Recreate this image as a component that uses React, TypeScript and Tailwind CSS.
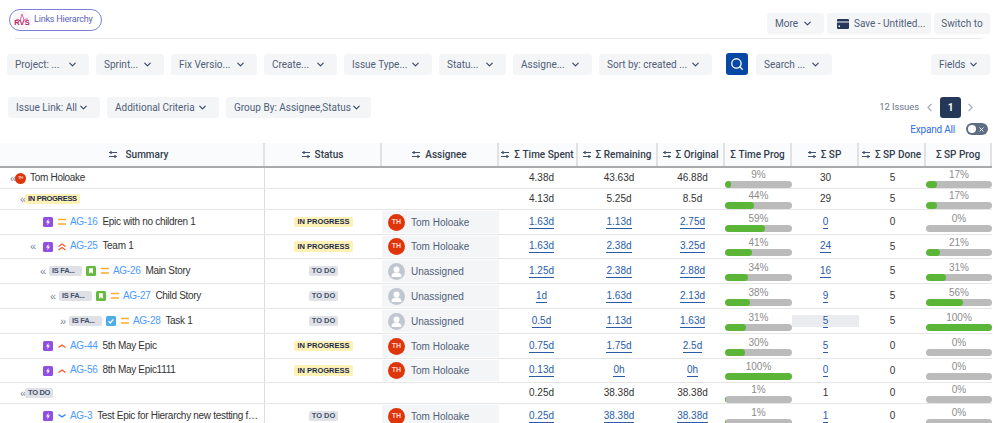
import { ChevronDown, ChevronLeft, ChevronRight, Search, X } from 'lucide-react';

const uiFont = "font-['Roboto',sans-serif]";

const topFilters = [
  { label: 'Project: ...', className: 'w-[82px]' },
  { label: 'Sprint...', className: 'w-[68px]' },
  { label: 'Fix Versio...', className: 'w-[86px]' },
  { label: 'Create...', className: 'w-[73px]' },
  { label: 'Issue Type...', className: 'w-[88px]' },
  { label: 'Statu...', className: 'w-[67px]' },
  { label: 'Assigne...', className: 'w-[79px]' },
  { label: 'Sort by: created ...', className: 'w-[113px]' },
];

const secondFilters = [
  { label: 'Issue Link: All', className: 'w-[92px]' },
  { label: 'Additional Criteria', className: 'w-[112px]' },
  { label: 'Group By: Assignee,Status', className: 'w-[145px]' },
];

const columns = [
  { label: 'Summary', className: 'w-[265px] gap-[9px] pl-[14px]', sort: true },
  { label: 'Status', className: 'w-[117px] gap-[5px]', sort: true },
  { label: 'Assignee', className: 'w-[117px] gap-[5px]', sort: true },
  { label: 'Σ Time Spent', className: 'w-[79px] gap-[5px]', sort: true },
  { label: 'Σ Remaining', className: 'w-[80px] gap-[5px]', sort: true },
  { label: 'Σ Original', className: 'w-[67px] gap-[5px]', sort: true },
  { label: 'Σ Time Prog', className: 'w-[67px] gap-[5px]', sort: false },
  { label: 'Σ SP', className: 'w-[67px] gap-[5px]', sort: true },
  { label: 'Σ SP Done', className: 'w-[67px] gap-[5px]', sort: true },
  { label: 'Σ SP Prog', className: 'w-[66px] gap-[5px]', sort: false },
];

type Row = {
  height: string;
  pad: string;
  toggle?: string;
  group?: 'person' | 'IN PROGRESS' | 'TO DO';
  link?: boolean;
  type?: 'epic' | 'story' | 'task';
  priority?: 'medium' | 'high' | 'major' | 'low';
  issue?: string;
  title?: string;
  status?: 'IN PROGRESS' | 'TO DO';
  assignee?: string;
  spent: string;
  remaining: string;
  original: string;
  timeProg: number;
  sp: string;
  spDone: string;
  spProg: number;
  linked?: boolean;
  highlight?: boolean;
};

const rows: Row[] = [
  { height: 'h-[21px]', pad: 'pl-[10px]', toggle: '«', group: 'person', spent: '4.38d', remaining: '43.63d', original: '46.88d', timeProg: 9, sp: '30', spDone: '5', spProg: 17 },
  { height: 'h-[21px]', pad: 'pl-[20px]', toggle: '«', group: 'IN PROGRESS', spent: '4.13d', remaining: '5.25d', original: '8.5d', timeProg: 44, sp: '29', spDone: '5', spProg: 17 },
  { height: 'h-[25px]', pad: 'pl-[43px]', type: 'epic', priority: 'medium', issue: 'AG-16', title: 'Epic with no children 1', status: 'IN PROGRESS', assignee: 'Tom Holoake', spent: '1.63d', remaining: '1.13d', original: '2.75d', timeProg: 59, sp: '0', spDone: '0', spProg: 0, linked: true },
  { height: 'h-[24px]', pad: 'pl-[30px]', toggle: '«', type: 'epic', priority: 'major', issue: 'AG-25', title: 'Team 1', status: 'IN PROGRESS', assignee: 'Tom Holoake', spent: '1.63d', remaining: '2.38d', original: '3.25d', timeProg: 41, sp: '24', spDone: '5', spProg: 21, linked: true },
  { height: 'h-[25px]', pad: 'pl-[40px]', toggle: '«', link: true, type: 'story', priority: 'medium', issue: 'AG-26', title: 'Main Story', status: 'TO DO', assignee: 'Unassigned', spent: '1.25d', remaining: '2.38d', original: '2.88d', timeProg: 34, sp: '16', spDone: '5', spProg: 31, linked: true },
  { height: 'h-[25px]', pad: 'pl-[50px]', toggle: '«', link: true, type: 'story', priority: 'medium', issue: 'AG-27', title: 'Child Story', status: 'TO DO', assignee: 'Unassigned', spent: '1d', remaining: '1.63d', original: '2.13d', timeProg: 38, sp: '9', spDone: '5', spProg: 56, linked: true },
  { height: 'h-[25px]', pad: 'pl-[60px]', toggle: '»', link: true, type: 'task', priority: 'medium', issue: 'AG-28', title: 'Task 1', status: 'TO DO', assignee: 'Unassigned', spent: '0.5d', remaining: '1.13d', original: '1.63d', timeProg: 31, sp: '5', spDone: '5', spProg: 100, linked: true, highlight: true },
  { height: 'h-[25px]', pad: 'pl-[43px]', type: 'epic', priority: 'high', issue: 'AG-44', title: '5th May Epic', status: 'IN PROGRESS', assignee: 'Tom Holoake', spent: '0.75d', remaining: '1.75d', original: '2.5d', timeProg: 30, sp: '5', spDone: '0', spProg: 0, linked: true },
  { height: 'h-[24px]', pad: 'pl-[43px]', type: 'epic', priority: 'high', issue: 'AG-56', title: '8th May Epic1111', status: 'IN PROGRESS', assignee: 'Tom Holoake', spent: '0.13d', remaining: '0h', original: '0h', timeProg: 100, sp: '0', spDone: '0', spProg: 0, linked: true },
  { height: 'h-[21px]', pad: 'pl-[20px]', toggle: '«', group: 'TO DO', spent: '0.25d', remaining: '38.38d', original: '38.38d', timeProg: 1, sp: '1', spDone: '0', spProg: 0 },
  { height: 'h-[25px]', pad: 'pl-[43px]', type: 'epic', priority: 'low', issue: 'AG-3', title: 'Test Epic for Hierarchy new testting for long summary', status: 'TO DO', assignee: 'Tom Holoake', spent: '0.25d', remaining: '38.38d', original: '38.38d', timeProg: 1, sp: '1', spDone: '0', spProg: 0, linked: true },
];

function FilterButton({ label, className }: { label: string; className: string }) {
  return (
    <button className={`${className} ${uiFont} flex h-[21px] shrink-0 items-center justify-between rounded-[3px] bg-[#f4f5f7] pl-2 pr-[11px] text-[10px] text-[#505f79]`}>
      <span className="whitespace-nowrap">{label}</span>
      <ChevronDown size={11} strokeWidth={2.5} className="shrink-0 text-[#344563]" />
    </button>
  );
}

function SortIcon() {
  return (
    <svg width="8" height="7" viewBox="0 0 8 7" className="shrink-0 text-[#42526e]">
      <path d="M0 1.5h8M0 5.5h8" stroke="currentColor" strokeWidth="1" />
      <path d="M2 0v3M6 4v3" stroke="currentColor" strokeWidth="1.3" />
    </svg>
  );
}

function Logo() {
  return (
    <svg width="18" height="18" viewBox="0 0 18 18" className="shrink-0">
      <circle cx="9" cy="9" r="8.5" fill="#fdf7fb" stroke="#eee3ee" strokeWidth="0.5" />
      <path d="M3 9l2-1 2 2 2-7 2 6 2-1h2" fill="none" stroke="#e26a9c" strokeWidth="1" />
      <text x="9" y="14" textAnchor="middle" fontSize="7.5" fontWeight="700" fill="#b3245e" fontFamily="Liberation Sans">RVS</text>
    </svg>
  );
}

function TypeIcon({ type }: { type: Row['type'] }) {
  if (type === 'story') {
    return (
      <svg width="10" height="10" viewBox="0 0 10 10" className="shrink-0">
        <rect width="10" height="10" rx="1.5" fill="#63ba3c" />
        <path d="M3 2.2h4v5.6L5 6.3 3 7.8z" fill="#fff" />
      </svg>
    );
  }
  if (type === 'task') {
    return (
      <svg width="10" height="10" viewBox="0 0 10 10" className="shrink-0">
        <rect width="10" height="10" rx="1.5" fill="#4bade8" />
        <path d="M2.6 5.2l1.7 1.7 3.1-3.5" fill="none" stroke="#fff" strokeWidth="1.4" />
      </svg>
    );
  }
  return (
    <svg width="10" height="10" viewBox="0 0 10 10" className="shrink-0">
      <rect width="10" height="10" rx="1.5" fill="#904ee2" />
      <path d="M5.6 1.8L3 5.5h1.7l-.4 2.7L7 4.5H5.3z" fill="#fff" />
    </svg>
  );
}

function PriorityIcon({ priority }: { priority: Row['priority'] }) {
  if (priority === 'medium') {
    return (
      <svg width="8" height="8" viewBox="0 0 8 8" className="shrink-0">
        <path d="M0 1.5h8M0 6h8" stroke="#ffab2e" strokeWidth="1.5" />
      </svg>
    );
  }
  if (priority === 'low') {
    return (
      <svg width="8" height="8" viewBox="0 0 8 8" className="shrink-0">
        <path d="M.5 2.5L4 5l3.5-2.5" fill="none" stroke="#2684ff" strokeWidth="1.4" />
      </svg>
    );
  }
  if (priority === 'major') {
    return (
      <svg width="8" height="8" viewBox="0 0 8 8" className="shrink-0">
        <path d="M.5 3.5L4 1l3.5 2.5M.5 7L4 4.5 7.5 7" fill="none" stroke="#ff5630" strokeWidth="1.2" />
      </svg>
    );
  }
  return (
    <svg width="8" height="8" viewBox="0 0 8 8" className="shrink-0">
      <path d="M.5 5.5L4 3l3.5 2.5" fill="none" stroke="#ff5630" strokeWidth="1.4" />
    </svg>
  );
}

function Lozenge({ label, wide }: { label: string; wide?: boolean }) {
  const tone = label === 'IN PROGRESS' ? 'bg-[#fff0b3] text-[#172b4d]' : 'bg-[#dfe1e6] text-[#42526e]';
  return (
    <span className={`${tone} ${wide ? 'w-[33px]' : ''} inline-flex h-[10.5px] shrink-0 items-center rounded-[2px] px-[3px] font-['Liberation_Sans',sans-serif] text-[7.5px] font-bold whitespace-nowrap`}>
      {label}
    </span>
  );
}

function Avatar({ name, small }: { name: string; small?: boolean }) {
  if (name === 'Unassigned') {
    return (
      <svg width="17" height="17" viewBox="0 0 17 17" className="shrink-0">
        <circle cx="8.5" cy="8.5" r="8.5" fill="#c1c7d0" />
        <circle cx="8.5" cy="6.5" r="3" fill="#fff" />
        <path d="M3.5 14c0-3.5 2-4.5 5-4.5s5 1 5 4.5z" fill="#fff" />
      </svg>
    );
  }
  return (
    <span className={`${small ? 'h-[11px] w-[11px] text-[4px]' : 'h-[17px] w-[17px] text-[7px]'} flex shrink-0 items-center justify-center rounded-full bg-[#de350b] font-bold text-[#ffd5cc]`}>
      TH
    </span>
  );
}

function Progress({ value }: { value: number }) {
  return (
    <div className="flex w-full flex-col items-center">
      <span className="text-[10px] leading-[12px] text-[#8c8c8c]">{value}%</span>
      <div className="h-[7px] w-full overflow-hidden rounded-full bg-[#bbbbbb]">
        <div className="h-full rounded-full bg-[#5bb537]" style={{ width: `${value}%`, minWidth: value > 1 ? 6 : 0 }} />
      </div>
    </div>
  );
}

function Value({ value, linked }: { value: string; linked?: boolean }) {
  return linked ? (
    <span className="border-b border-[#2a5ca8] text-[10px] leading-[12px] text-[#2a5ca8]">{value}</span>
  ) : (
    <span className="text-[10px] leading-[12px] text-[#333333]">{value}</span>
  );
}

function TableRow({ row }: { row: Row }) {
  return (
    <div className={`${row.height} flex items-stretch border-b-[1.5px] border-[#e6e6e6] font-['Liberation_Sans',sans-serif]`}>
      <div className={`${row.pad} flex w-[265px] items-center border-r border-[#dddddd] text-[10px] tracking-[-0.3px] text-[#333333]`}>
        {row.toggle && <span className="w-[5px] text-[11px] leading-none text-[#7a869a]">{row.toggle}</span>}
        {row.group === 'person' ? (
          <div className="flex items-center gap-[4px]">
            <Avatar name="Tom Holoake" small />
            <span className="mb-[2px]">Tom Holoake</span>
          </div>
        ) : row.group ? (
          <Lozenge label={row.group} />
        ) : (
          <div className={`${row.toggle ? (row.link ? 'ml-[4px]' : 'ml-[8px]') : ''} flex min-w-0 items-center`}>
            {row.link && <span className="mr-[4px] flex"><Lozenge label="IS FA..." wide /></span>}
            <TypeIcon type={row.type} />
            <span className="ml-[5px] flex"><PriorityIcon priority={row.priority} /></span>
            <span className="mb-[2px] ml-[4px] shrink-0 text-[#4c9aff]">{row.issue}</span>
            <span className="mb-[2px] ml-[5px] w-[162px] truncate">{row.title}</span>
          </div>
        )}
      </div>
      <div className="flex w-[117px] items-center justify-center">
        {row.status && <Lozenge label={row.status} />}
      </div>
      <div className="w-[117px] py-[1px]">
        {row.assignee && (
          <div className="flex h-full items-center gap-[6px] bg-[#f4f5f7] pl-[6px] text-[10px] text-[#505f79]">
            <Avatar name={row.assignee} />
            <span>{row.assignee}</span>
          </div>
        )}
      </div>
      <div className="flex w-[79px] items-center justify-center pl-[6px]"><Value value={row.spent} linked={row.linked} /></div>
      <div className="flex w-[80px] items-center justify-center pl-[2px]"><Value value={row.remaining} linked={row.linked} /></div>
      <div className="flex w-[67px] items-center justify-center pl-[2px]"><Value value={row.original} linked={row.linked} /></div>
      <div className="flex w-[67px] items-center"><Progress value={row.timeProg} /></div>
      <div className="flex w-[67px] items-center justify-center">
        <div className={`${row.highlight ? 'bg-[#ebecf0]' : ''} flex h-[12px] w-full items-center justify-center`}>
          <Value value={row.sp} linked={row.linked} />
        </div>
      </div>
      <div className="flex w-[67px] items-center justify-center"><Value value={row.spDone} /></div>
      <div className="flex w-[66px] items-center"><Progress value={row.spProg} /></div>
    </div>
  );
}

export default function App() {
  return (
    <div className="h-[423px] w-[999px] overflow-hidden bg-white">
      <div className="flex h-[38px] items-start justify-between pl-[9px] pr-[9px]">
        <div className="mt-[9px] flex h-[22px] w-[93px] items-center gap-[3px] rounded-full border border-[#7a80d6] pl-[3px]">
          <Logo />
          <span className={`${uiFont} whitespace-nowrap text-[9px] tracking-[-0.2px] text-[#5b63b7]`}>Links Hierarchy</span>
        </div>
        <div className={`${uiFont} mt-[13px] flex gap-[3px] text-[10px] text-[#505f79]`}>
          <button className="flex h-[21px] w-[57px] items-center justify-between rounded-[3px] bg-[#f4f5f7] pl-2 pr-[11px]">
            More
            <ChevronDown size={11} strokeWidth={2.5} className="text-[#344563]" />
          </button>
          <button className="flex h-[21px] w-[104px] items-center gap-[5px] whitespace-nowrap rounded-[3px] bg-[#f4f5f7] pl-[10px]">
            <svg width="12" height="10" viewBox="0 0 12 10" className="shrink-0">
              <path d="M1 0h10a1 1 0 011 1v1.5H0V1a1 1 0 011-1zM0 3.5h12V9a1 1 0 01-1 1H1a1 1 0 01-1-1z" fill="#253858" />
              <rect x="1.5" y="6.5" width="1.5" height="1.5" fill="#fff" />
            </svg>
            Save - Untitled...
          </button>
          <button className="flex h-[21px] w-[56px] items-center justify-center rounded-[3px] bg-[#f4f5f7]">Switch to</button>
        </div>
      </div>
      <div className="ml-[15px] h-[1px] w-[967px] bg-[#e8e8e8]" />

      <div className="mt-[14px] flex items-center pl-[7px] pr-[9px]">
        <div className="flex gap-[7px]">
          {topFilters.map((f) => (
            <FilterButton key={f.label} label={f.label} className={f.className} />
          ))}
        </div>
        <button className="ml-[14px] flex h-[22px] w-[22px] items-center justify-center rounded-[3px] bg-[#0747a6]">
          <Search size={14} strokeWidth={2.2} className="text-white" />
        </button>
        <div className="ml-[8px]">
          <FilterButton label="Search ..." className="w-[76px]" />
        </div>
        <div className="ml-auto">
          <FilterButton label="Fields" className="w-[59px]" />
        </div>
      </div>

      <div className="mt-[22px] flex h-[46px] items-start justify-between pl-[8px] pr-[11px]">
        <div className="flex gap-[7px]">
          {secondFilters.map((f) => (
            <FilterButton key={f.label} label={f.label} className={f.className} />
          ))}
        </div>
        <div className={`${uiFont} flex flex-col items-end`}>
          <div className="flex h-[21px] items-center text-[9.5px] tracking-[-0.1px] text-[#6b778c]">
            <span>12 Issues</span>
            <ChevronLeft size={13} className="ml-[4px] text-[#a5adba]" />
            <span className="ml-[4px] flex h-[21px] w-[21px] items-center justify-center rounded-[3px] bg-[#253858] text-[10px] font-bold text-white">1</span>
            <ChevronRight size={13} className="ml-[3px] text-[#a5adba]" />
            <span className="w-[11px]" />
          </div>
          <div className="mt-[5px] flex h-[12px] items-center">
            <span className="text-[10px] tracking-[-0.2px] text-[#2f6fdb]">Expand All</span>
            <span className="ml-[11px] flex h-[12px] w-[22px] items-center justify-between rounded-full bg-[#5e6c84] pl-[2px] pr-[3px]">
              <span className="h-[8px] w-[8px] rounded-full bg-white" />
              <X size={7} strokeWidth={3} className="text-white" />
            </span>
          </div>
        </div>
      </div>

      <div className="w-[992px]">
        <div className="flex h-[25px] border-b-2 border-[#aaaaaa] bg-[#fafbfc] font-['Roboto',sans-serif] text-[10px] font-medium text-[#333d4d]">
          {columns.map((c) => (
            <div key={c.label} className={`${c.className} flex items-center justify-center border-r-2 border-[#e2e2e2] whitespace-nowrap`}>
              {c.sort && <SortIcon />}
              <span>{c.label}</span>
            </div>
          ))}
        </div>
        {rows.map((row, i) => (
          <TableRow key={i} row={row} />
        ))}
      </div>
    </div>
  );
}
